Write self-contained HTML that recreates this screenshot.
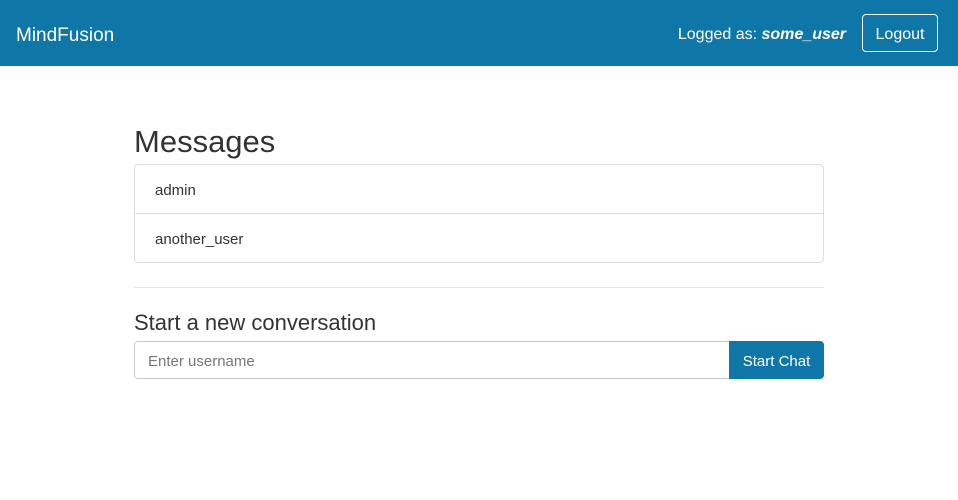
<!DOCTYPE html>
<html><head><style>
body{margin:0;font-family:"Liberation Sans",sans-serif;background:#fff;color:#212529}
.nav{height:66px;background:#0f76a8;color:#fff;position:relative}
.brand{position:absolute;left:16px;top:25px;font-size:19px}
.logged{position:absolute;right:112px;top:26px;font-size:16px}
.btn{position:absolute;left:862px;top:14px;width:76px;height:38px;border:1px solid #fff;border-radius:4px;box-sizing:border-box;text-align:center;line-height:40px;font-size:16px}
h1{position:absolute;left:134px;top:124px;margin:0;font-weight:400;font-size:31px;color:#333}
.list{position:absolute;left:134px;top:164px;width:688px;border:1px solid #ddd;border-radius:4px}
.item{height:48px;line-height:52px;padding-left:20px;font-size:15px;color:#333}
.item+.item{border-top:1px solid #ddd}
hr{position:absolute;left:134px;top:287px;width:690px;margin:0;border:0;border-top:1px solid #e5e5e5}
h3{position:absolute;left:134px;top:310px;margin:0;font-weight:400;font-size:22px;color:#333}
.inp{position:absolute;left:134px;top:341px;width:596px;height:38px;border:1px solid #ccc;border-radius:4px 0 0 4px;box-sizing:border-box;padding-left:13px;line-height:40px;font-size:15px;color:#777}
.go{position:absolute;left:729px;top:341px;width:95px;height:38px;background:#0f76a8;color:#fff;border-radius:0 4px 4px 0;text-align:center;line-height:42px;font-size:15px}
</style></head><body>
<div class="nav"><div class="brand">MindFusion</div><div class="logged">Logged as: <b><i>some_user</i></b></div><div class="btn">Logout</div></div>
<h1>Messages</h1>
<div class="list"><div class="item">admin</div><div class="item">another_user</div></div>
<hr>
<h3>Start a new conversation</h3>
<div class="inp">Enter username</div><div class="go">Start Chat</div>
</body></html>
